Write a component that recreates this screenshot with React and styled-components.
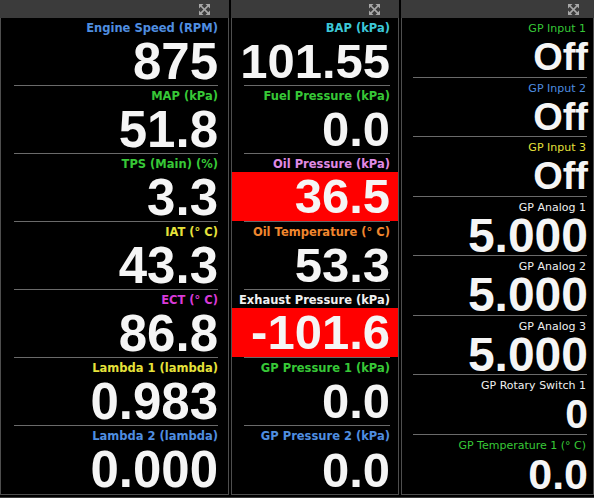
import React from "react";
import styled, { createGlobalStyle } from "styled-components";

const GlobalStyle = createGlobalStyle`
  html, body {
    margin: 0;
    padding: 0;
    background: #000;
  }
`;

const Frame = styled.div`
  box-sizing: border-box;
  width: 594px;
  height: 498px;
  display: grid;
  grid-template-columns: 229px 168px 193px;
  column-gap: 2px;
  padding-bottom: 2px;
  border-bottom: 1px solid #3a3a3a;
  background: #000;
`;

const Panel = styled.div`
  display: flex;
  flex-direction: column;
  min-height: 0;
`;

const Header = styled.div`
  height: 18px;
  flex: none;
  background: #3b3b3b;
  display: flex;
  align-items: center;
  justify-content: flex-end;
  padding-right: ${(p) => p.$iconRight}px;
`;

const Body = styled.div`
  flex: 1;
  display: flex;
  flex-direction: column;
  border: 1px solid #4e4e4e;
  border-top: none;
  background: #000;
  min-height: 0;
`;

const Row = styled.div`
  flex: 1;
  display: flex;
  flex-direction: column;
  min-height: 0;
`;

const Label = styled.div`
  box-sizing: border-box;
  height: 18px;
  flex: none;
  padding-top: 3px;
  line-height: 15px;
  text-align: right;
  padding-right: ${(p) => p.$pad}px;
  font-family: "DejaVu Sans", Verdana, sans-serif;
  font-size: ${(p) => (p.$bold ? "11.5px" : "11px")};
  font-weight: ${(p) => (p.$bold ? 700 : 400)};
  color: ${(p) => p.$color};
  white-space: nowrap;
`;

const Value = styled.div`
  flex: 1;
  display: flex;
  align-items: center;
  justify-content: flex-end;
  min-height: 0;
  padding-right: ${(p) => p.$pad}px;
  padding-top: ${(p) => (p.$alarm ? 0 : 3)}px;
  background: ${(p) => (p.$alarm ? "#ff0000" : "transparent")};
  font-family: "Liberation Sans", Arial, sans-serif;
  font-weight: 700;
  font-size: ${(p) => p.$size}px;
  line-height: 0.72;
  color: #f5f5f5;
  white-space: nowrap;
`;

const Divider = styled.div`
  height: 1px;
  flex: none;
  background: #6a6a6a;
  margin: 0 ${(p) => p.$right}px 0 ${(p) => p.$left}px;
`;

const MaximizeIcon = () => (
  <svg width="11" height="11" viewBox="0 0 11 11">
    <g stroke="#a8a8a8" strokeWidth="1.6" strokeLinecap="square">
      <line x1="2.5" y1="2.5" x2="8.5" y2="8.5" />
      <line x1="8.5" y1="2.5" x2="2.5" y2="8.5" />
    </g>
    <g fill="#a8a8a8">
      <polygon points="0,0 4.5,0 0,4.5" />
      <polygon points="11,0 6.5,0 11,4.5" />
      <polygon points="0,11 4.5,11 0,6.5" />
      <polygon points="11,11 6.5,11 11,6.5" />
    </g>
  </svg>
);

const BLUE = "#4f8ee0";
const GREEN = "#37c837";
const YELLOW = "#e6e23a";
const MAGENTA = "#d83ad8";
const CYAN = "#3cc8d8";
const PINK = "#e08ae6";
const ORANGE = "#f0862e";
const WHITE = "#f0f0f0";

const panels = [
  {
    iconRight: 19,
    bold: true,
    labelPad: 10,
    valuePad: 10,
    size: 51,
    divider: [13, 10],
    rows: [
      { label: "Engine Speed (RPM)", color: BLUE, value: "875" },
      { label: "MAP (kPa)", color: GREEN, value: "51.8" },
      { label: "TPS (Main) (%)", color: GREEN, value: "3.3" },
      { label: "IAT (° C)", color: YELLOW, value: "43.3" },
      { label: "ECT (° C)", color: MAGENTA, value: "86.8" },
      { label: "Lambda 1 (lambda)", color: YELLOW, value: "0.983" },
      { label: "Lambda 2 (lambda)", color: BLUE, value: "0.000" },
    ],
  },
  {
    iconRight: 19,
    bold: true,
    labelPad: 8,
    valuePad: 8,
    size: 49,
    divider: [12, 8],
    rows: [
      { label: "BAP (kPa)", color: CYAN, value: "101.55" },
      { label: "Fuel Pressure (kPa)", color: GREEN, value: "0.0" },
      { label: "Oil Pressure (kPa)", color: PINK, value: "36.5", alarm: true },
      { label: "Oil Temperature (° C)", color: ORANGE, value: "53.3" },
      { label: "Exhaust Pressure (kPa)", color: WHITE, value: "-101.6", alarm: true },
      { label: "GP Pressure 1 (kPa)", color: GREEN, value: "0.0" },
      { label: "GP Pressure 2 (kPa)", color: BLUE, value: "0.0" },
    ],
  },
  {
    iconRight: 15,
    bold: false,
    labelPad: 7,
    valuePad: 5,
    size: 42,
    divider: [11, 6],
    rows: [
      { label: "GP Input 1", color: GREEN, value: "Off", size: 38 },
      { label: "GP Input 2", color: BLUE, value: "Off", size: 38 },
      { label: "GP Input 3", color: YELLOW, value: "Off", size: 38 },
      { label: "GP Analog 1", color: WHITE, value: "5.000", size: 48 },
      { label: "GP Analog 2", color: WHITE, value: "5.000", size: 48 },
      { label: "GP Analog 3", color: WHITE, value: "5.000", size: 48 },
      { label: "GP Rotary Switch 1", color: WHITE, value: "0", size: 41 },
      { label: "GP Temperature 1 (° C)", color: GREEN, value: "0.0", size: 43 },
    ],
  },
];

export default function App() {
  return (
    <>
      <GlobalStyle />
      <Frame>
        {panels.map((panel, i) => (
          <Panel key={i}>
            <Header $iconRight={panel.iconRight}>
              <MaximizeIcon />
            </Header>
            <Body>
              {panel.rows.map((row, j) => (
                <Row key={row.label}>
                  <Label $color={row.color} $bold={panel.bold} $pad={panel.labelPad}>
                    {row.label}
                  </Label>
                  <Value
                    $pad={panel.valuePad}
                    $size={row.size || panel.size}
                    $alarm={row.alarm}
                  >
                    {row.value}
                  </Value>
                  {j < panel.rows.length - 1 && (
                    <Divider $left={panel.divider[0]} $right={panel.divider[1]} />
                  )}
                </Row>
              ))}
            </Body>
          </Panel>
        ))}
      </Frame>
    </>
  );
}
